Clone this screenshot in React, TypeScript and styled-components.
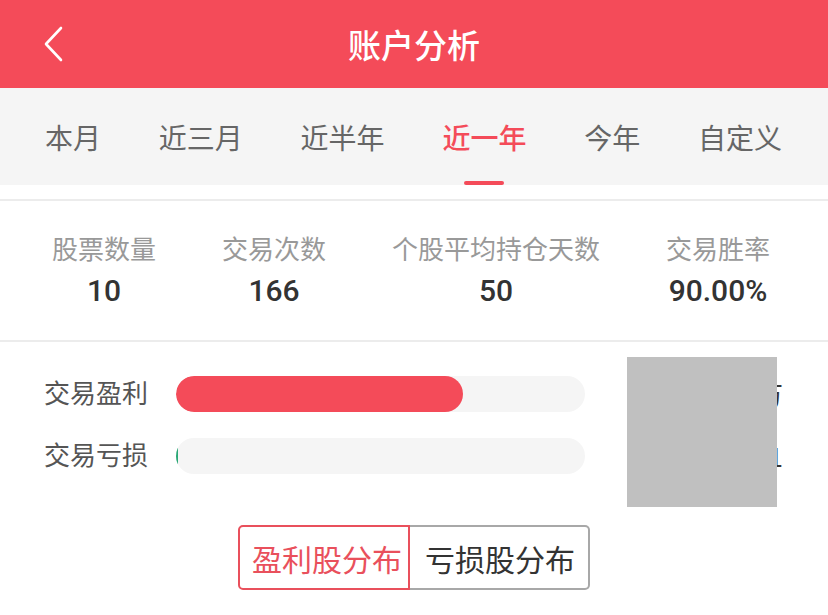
import { useState } from "react";
import styled, { createGlobalStyle } from "styled-components";

const red = "#f44b59";
const lineColor = "#ececec";

const GlobalStyle = createGlobalStyle`
  body {
    margin: 0;
    background: #fff;
    font-family: "Noto Sans CJK SC", "Noto Sans", sans-serif;
  }
`;

const Page = styled.div`
  width: 828px;
  min-height: 615px;
  background: #fff;
`;

const Header = styled.header`
  height: 88px;
  background: ${red};
  display: grid;
  grid-template-columns: 1fr auto 1fr;
  align-items: center;
`;
const BackButton = styled.button`
  justify-self: start;
  margin-left: 42px;
  padding: 0;
  border: none;
  background: none;
  display: flex;
  cursor: pointer;
`;
const Title = styled.h1`
  margin: 0;
  color: #fff;
  font-size: 33px;
  font-weight: 500;
  line-height: 33px;
`;

const TabBar = styled.nav`
  height: 97px;
  background: #f5f5f5;
  display: flex;
  justify-content: space-between;
  padding: 0 46px 0 45px;
`;
type TTab = { $active: boolean };
const Tab = styled.div<TTab>`
  display: flex;
  flex-direction: column;
  align-items: center;
  padding-top: 35px;
  cursor: pointer;
  font-size: 28px;
  line-height: 28px;
  color: ${({ $active }) => ($active ? red : "#666")};
  font-weight: ${({ $active }) => ($active ? 500 : 400)};
`;
const TabLine = styled.span<TTab>`
  margin-top: 30px;
  width: 40px;
  height: 4px;
  border-radius: 2px;
  background: ${({ $active }) => ($active ? red : "transparent")};
`;
const Spacer = styled.div`
  height: 14px;
  border-bottom: 2px solid ${lineColor};
`;

const Stats = styled.section`
  display: flex;
  justify-content: space-between;
  padding: 34px 58px 34px 52px;
  border-bottom: 2px solid ${lineColor};
`;
const Stat = styled.div`
  display: flex;
  flex-direction: column;
  align-items: center;
  gap: 15px;
`;
const StatLabel = styled.span`
  font-size: 26px;
  line-height: 26px;
  color: #999;
`;
const StatValue = styled.span`
  font-family: Roboto, "Noto Sans", sans-serif;
  font-size: 30px;
  line-height: 30px;
  font-weight: 500;
  color: #333;
`;

const Profit = styled.section`
  position: relative;
  padding: 34px 45px 0 44px;
  display: flex;
  flex-direction: column;
  gap: 26px;
`;
const BarRow = styled.div`
  display: flex;
  align-items: center;
  height: 36px;
`;
const BarLabel = styled.span`
  width: 132px;
  margin-top: -4px;
  font-size: 26px;
  line-height: 26px;
  color: #555;
`;
const Track = styled.div`
  width: 409px;
  height: 36px;
  border-radius: 18px;
  background: #f5f5f5;
  overflow: hidden;
`;
const Fill = styled.div<{ color: string }>`
  height: 100%;
  border-radius: 18px;
  background: ${({ color }) => color};
`;
const BarValue = styled.span`
  flex: 1;
  text-align: right;
  font-size: 26px;
  line-height: 26px;
  color: #333;
`;
const Mask = styled.div`
  position: absolute;
  top: 15px;
  left: 627px;
  width: 150px;
  height: 150px;
  background: #c0c0c0;
`;

const Switcher = styled.div`
  display: flex;
  justify-content: center;
  margin-top: 51px;
`;
type TSwitch = { $active: boolean; $side: "left" | "right" };
const SwitchButton = styled.button<TSwitch>`
  height: 65px;
  padding: ${({ $side }) => ($side === "left" ? "0 6px 0 12px" : "0 13px 0 15px")};
  font-family: "Noto Sans CJK SC", sans-serif;
  font-size: 30px;
  background: #fff;
  cursor: pointer;
  color: ${({ $active }) => ($active ? "#e9505c" : "#333")};
  border: 2px solid ${({ $active }) => ($active ? "#e9505c" : "#a8a8a8")};
  ${({ $side }) =>
    $side === "left"
      ? "border-radius: 5px 0 0 5px;"
      : "border-radius: 0 5px 5px 0; border-left: none;"}
`;

const tabs = ["本月", "近三月", "近半年", "近一年", "今年", "自定义"];
const stats = [
  { label: "股票数量", value: "10" },
  { label: "交易次数", value: "166" },
  { label: "个股平均持仓天数", value: "50" },
  { label: "交易胜率", value: "90.00%" },
];
const bars = [
  { label: "交易盈利", pct: 70.2, color: red, value: "12.65万" },
  { label: "交易亏损", pct: 0.6, color: "#2aa876", value: "-0.11" },
];

export default function App() {
  const [tab, setTab] = useState(3);
  const [mode, setMode] = useState(0);
  return (
    <Page>
      <GlobalStyle />
      <Header>
        <BackButton aria-label="back">
          <svg width="22" height="36" viewBox="0 0 22 36" fill="none">
            <path
              d="M19 2 L4 18 L19 34"
              stroke="#fff"
              strokeWidth="2.6"
              strokeLinecap="round"
              strokeLinejoin="round"
            />
          </svg>
        </BackButton>
        <Title>账户分析</Title>
      </Header>
      <TabBar>
        {tabs.map((t, i) => (
          <Tab key={t} $active={i === tab} onClick={() => setTab(i)}>
            {t}
            <TabLine $active={i === tab} />
          </Tab>
        ))}
      </TabBar>
      <Spacer />
      <Stats>
        {stats.map((s) => (
          <Stat key={s.label}>
            <StatLabel>{s.label}</StatLabel>
            <StatValue>{s.value}</StatValue>
          </Stat>
        ))}
      </Stats>
      <Profit>
        {bars.map((b) => (
          <BarRow key={b.label}>
            <BarLabel>{b.label}</BarLabel>
            <Track>
              <Fill color={b.color} style={{ width: `${b.pct}%` }} />
            </Track>
            <BarValue>{b.value}</BarValue>
          </BarRow>
        ))}
        <Mask />
      </Profit>
      <Switcher>
        <SwitchButton $side="left" $active={mode === 0} onClick={() => setMode(0)}>
          盈利股分布
        </SwitchButton>
        <SwitchButton $side="right" $active={mode === 1} onClick={() => setMode(1)}>
          亏损股分布
        </SwitchButton>
      </Switcher>
    </Page>
  );
}
